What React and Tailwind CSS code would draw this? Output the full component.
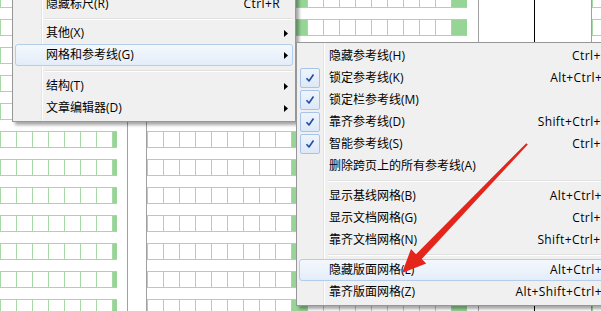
import React from 'react'

// --- background page (manuscript grid) ---------------------------------------
const ROWS = 12

function GridRow({ cells, greens = [], lead = 0 }) {
  return (
    <div className="flex h-[17px] border-y border-[#a6d8a6]">
      {lead > 0 && <div style={{ width: lead }} className="shrink-0" />}
      {Array.from({ length: cells }).map((_, i) => (
        <div
          key={i}
          className={`w-[16px] shrink-0 border-l border-[#a6d8a6] ${greens.includes(i) ? 'bg-[#97d597]' : 'bg-white'}`}
        />
      ))}
    </div>
  )
}

function GridColumn({ width, cells, greens, lead }) {
  return (
    <div className="shrink-0 overflow-hidden" style={{ width }}>
      <div className="mt-[-9px] flex flex-col gap-[11px]">
        {Array.from({ length: ROWS }).map((_, i) => (
          <GridRow key={i} cells={cells} greens={greens} lead={lead} />
        ))}
      </div>
    </div>
  )
}

// --- menus -------------------------------------------------------------------
function Arrow() {
  return (
    <svg width="4" height="7" viewBox="0 0 4 7" className="shrink-0">
      <path d="M0 0 L4 3.5 L0 7 Z" fill="#000" />
    </svg>
  )
}

function Check() {
  return (
    <div className="w-[20px] h-[20px] rounded-[2px] border border-[#a7c3e8] bg-gradient-to-b from-[#eef4fc] to-[#dde8f7] flex items-center justify-center">
      <svg width="10" height="10" viewBox="0 0 10 10">
        <path d="M1.5 5.2 L4 8 L8.5 1.5" fill="none" stroke="#1d4ea4" strokeWidth="1.6" strokeLinejoin="round" />
      </svg>
    </div>
  )
}

function MenuItem({ label, shortcut, sub, active, checked, textLeft, shortcutPad = 13 }) {
  return (
    <div
      className={`relative flex items-center h-[22px] rounded-[3px] border ${
        active ? 'border-[#b3cdea] bg-gradient-to-b from-[#f4f8fd] to-[#e3edf9]' : 'border-transparent'
      }`}
    >
      <div className="shrink-0 flex items-center" style={{ width: textLeft }}>
        {checked && <Check />}
      </div>
      <span className="flex-1 whitespace-nowrap text-black">{label}</span>
      {shortcut && (
        <span className="whitespace-nowrap text-black tracking-[0.4px]" style={{ marginRight: shortcutPad }}>
          {shortcut}
        </span>
      )}
      {sub && (
        <span className="mr-[4px]">
          <Arrow />
        </span>
      )}
    </div>
  )
}

function Separator({ left, h = 9 }) {
  return (
    <div className="flex items-center" style={{ height: h, paddingLeft: left }}>
      <div className="flex-1 h-[2px] border-t border-[#e0e0e0] border-b-white border-b" />
    </div>
  )
}

function MainMenu() {
  return (
    <div className="absolute left-[12px] top-[-10px] w-[284px] border border-[#979797] bg-[#f0f0f0] p-[2px] shadow-[3px_3px_3px_rgba(0,0,0,0.35)]">
      <div className="absolute left-[28px] top-0 bottom-0 w-[2px] border-l border-[#e4e4e4] border-r border-r-white" />
      <MenuItem label="隐藏标尺(R)" shortcut="Ctrl+R" textLeft={30} shortcutPad={12} />
      <Separator left={30} h={7} />
      <MenuItem label="其他(X)" sub textLeft={30} />
      <MenuItem label="网格和参考线(G)" sub active textLeft={30} />
      <Separator left={30} />
      <MenuItem label="结构(T)" sub textLeft={30} />
      <MenuItem label="文章编辑器(D)" sub textLeft={30} />
    </div>
  )
}

function SubMenu() {
  return (
    <div className="absolute left-[296px] top-[42px] w-[345px] border border-[#979797] bg-[#f0f0f0] p-[2px] shadow-[3px_3px_3px_rgba(0,0,0,0.35)]">
      <div className="absolute left-[26px] top-0 bottom-0 w-[2px] border-l border-[#e4e4e4] border-r border-r-white" />
      <MenuItem label="隐藏参考线(H)" shortcut="Ctrl+H" textLeft={29} shortcutPad={27} />
      <MenuItem label="锁定参考线(K)" shortcut="Alt+Ctrl+K" checked textLeft={29} shortcutPad={27} />
      <MenuItem label="锁定栏参考线(M)" checked textLeft={29} />
      <MenuItem label="靠齐参考线(D)" shortcut="Shift+Ctrl+D" checked textLeft={29} shortcutPad={27} />
      <MenuItem label="智能参考线(S)" shortcut="Ctrl+U" checked textLeft={29} shortcutPad={27} />
      <MenuItem label="删除跨页上的所有参考线(A)" textLeft={29} />
      <Separator left={29} h={8} />
      <MenuItem label="显示基线网格(B)" shortcut="Alt+Ctrl+B" textLeft={29} shortcutPad={27} />
      <MenuItem label="显示文档网格(G)" shortcut="Ctrl+G" textLeft={29} shortcutPad={27} />
      <MenuItem label="靠齐文档网格(N)" shortcut="Shift+Ctrl+N" textLeft={29} shortcutPad={27} />
      <Separator left={29} h={8} />
      <MenuItem label="隐藏版面网格(L)" shortcut="Alt+Ctrl+A" active textLeft={29} shortcutPad={27} />
      <MenuItem label="靠齐版面网格(Z)" shortcut="Alt+Shift+Ctrl+A" textLeft={29} shortcutPad={27} />
    </div>
  )
}

function RedArrow() {
  return (
    <svg className="absolute left-0 top-0 pointer-events-none" width="601" height="311" viewBox="0 0 601 311">
      <polygon
        points="527.8,144.6 421.8,258.9 426.2,263.6 402,273 411,249 416,254.2 526.3,143.2"
        fill="#e3251c"
      />
    </svg>
  )
}

export default function App() {
  return (
    <div className="relative w-[601px] h-[311px] overflow-hidden bg-white font-['Open_Sans','Noto_Sans_CJK_SC',sans-serif] text-[12px]">
      {/* page background */}
      <div className="flex h-full">
        <GridColumn width={117} cells={8} greens={[7]} lead={0} />
        <div className="w-[11px] shrink-0 border-r border-[#a0a0a0]" />
        <div className="w-[19px] shrink-0 border-r border-[#a0a0a0]" />
        <GridColumn width={320} cells={20} greens={[9, 19]} />
        <div className="w-[12px] shrink-0 border-r border-[#a0a0a0]" />
        <div className="w-[56px] shrink-0 border-r border-black" />
        <div className="w-[57px] shrink-0 border-r border-[#a0a0a0]" />
        <GridColumn width={20} cells={2} greens={[]} />
      </div>

      <MainMenu />
      <SubMenu />
      <RedArrow />
    </div>
  )
}
